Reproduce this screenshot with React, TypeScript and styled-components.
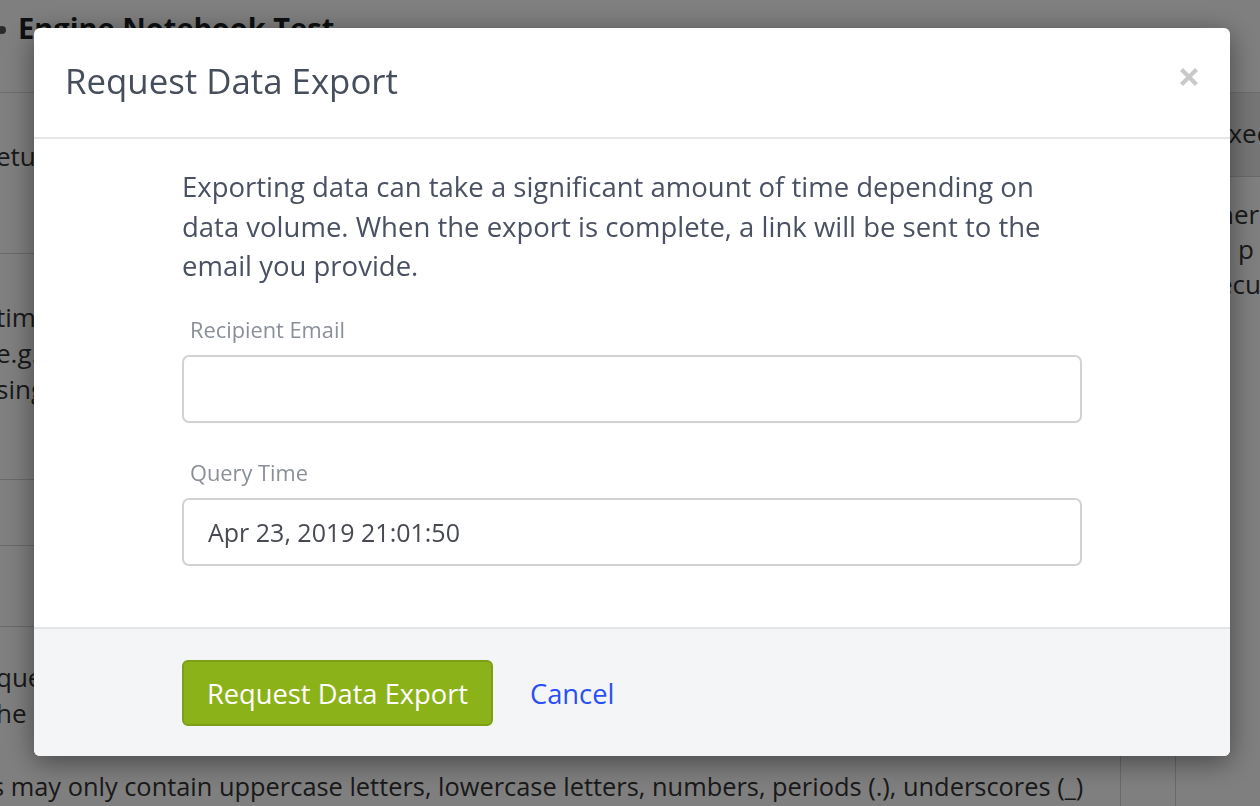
import React from 'react';
import styled, { createGlobalStyle } from 'styled-components';

const GlobalStyle = createGlobalStyle`
  html, body {
    margin: 0;
    padding: 0;
    width: 1260px;
    height: 806px;
    overflow: hidden;
    background: #ffffff;
    font-family: 'Open Sans', 'Noto Sans', sans-serif;
  }
  * {
    box-sizing: border-box;
  }
`;

/* ---------- page behind the modal ---------- */

const Page = styled.div`
  width: 1260px;
  height: 806px;
  overflow: hidden;
  display: flex;
  flex-direction: column;
  color: #222;
`;

const PageHeader = styled.header`
  height: 93px;
  flex-shrink: 0;
  border-bottom: 1px solid #dcdcdc;
  display: flex;
  align-items: flex-start;
  gap: 12px;
  padding: 8px 0 0 0;
  font-size: 29px;
  font-weight: 700;
  color: #1d1f24;
`;

const Bullet = styled.span`
  width: 8px;
  height: 8px;
  margin: 18px 0 0 -2px;
  border-radius: 50%;
  background: #555;
`;

const Columns = styled.div`
  flex: 1;
  display: flex;
  min-width: 0;
`;

const MainCol = styled.div`
  width: 1120px;
  flex-shrink: 0;
  display: flex;
  flex-direction: column;
  overflow: hidden;
`;

const Gutter = styled.div`
  width: 55px;
  flex-shrink: 0;
  border-left: 1px solid #d4d4d4;
`;

const SideCol = styled.div`
  flex: 1;
  min-width: 0;
  overflow: hidden;
  border-left: 1px solid #d4d4d4;
  display: flex;
  flex-direction: column;
`;

const Section = styled.div<{ $h: number; $pad?: number; $last?: boolean }>`
  height: ${(p) => p.$h}px;
  flex-shrink: 0;
  border-bottom: ${(p) => (p.$last ? 'none' : '1px solid #d4d4d4')};
  padding-top: ${(p) => p.$pad ?? 0}px;
  font-size: 26px;
  line-height: 36px;
  color: #333;
  white-space: nowrap;
  overflow: hidden;
`;

const Cut = styled.div`
  margin-left: -4px;
`;

const SideBand = styled.div`
  height: 84px;
  flex-shrink: 0;
  background: #ececec;
  border-bottom: 1px solid #d4d4d4;
  padding: 22px 0 0 38px;
  font-size: 26px;
  color: #333;
  white-space: nowrap;
`;

const SideText = styled.div`
  padding: 20px 0 0 42px;
  font-size: 26px;
  line-height: 35px;
  color: #333;
  white-space: nowrap;
`;

const BottomNote = styled.div`
  margin-left: -8px;
  padding-top: 14px;
  font-size: 25.4px;
  color: #333;
  white-space: nowrap;
`;

/* ---------- modal ---------- */

const Overlay = styled.div`
  position: fixed;
  inset: 0;
  background: rgba(0, 0, 0, 0.5);
  display: flex;
  align-items: flex-start;
  justify-content: flex-start;
  padding: 28px 0 0 34px;
`;

const Modal = styled.div`
  width: 1196px;
  background: #ffffff;
  border-radius: 6px;
  overflow: hidden;
  box-shadow: 0 6px 28px rgba(0, 0, 0, 0.45);
  display: flex;
  flex-direction: column;
`;

const ModalHeader = styled.div`
  height: 111px;
  border-bottom: 2px solid #e6e6e6;
  display: flex;
  align-items: flex-start;
  justify-content: space-between;
  padding: 29px 32px 0 31px;
`;

const Title = styled.h2`
  margin: 0;
  font-size: 34.8px;
  font-weight: 400;
  color: #464d5b;
`;

const CloseButton = styled.button`
  border: 0;
  background: none;
  padding: 0;
  margin-top: 11px;
  width: 18px;
  height: 18px;
  cursor: pointer;
  display: flex;
`;

const ModalBody = styled.div`
  padding: 28px 148px 61px 148px;
  display: flex;
  flex-direction: column;
`;

const Intro = styled.p`
  margin: 0 0 30px;
  font-size: 27.5px;
  line-height: 39.5px;
  color: #4a5162;
`;

const Field = styled.div<{ $gap?: number }>`
  display: flex;
  flex-direction: column;
  margin-top: ${(p) => p.$gap ?? 0}px;
`;

const Label = styled.label`
  padding-left: 8px;
  font-size: 21.8px;
  line-height: 28px;
  color: #8a8f99;
  margin-bottom: 11px;
`;

const Input = styled.input`
  width: 900px;
  height: 68px;
  border: 2px solid #d2d2d2;
  border-radius: 7px;
  padding: 0 24px;
  font-family: inherit;
  font-size: 25px;
  color: #474a50;
  background: #fff;
  outline: none;
`;

const ModalFooter = styled.div`
  height: 129px;
  background: #f4f5f7;
  border-top: 2px solid #e4e5e7;
  display: flex;
  align-items: center;
  gap: 37px;
  padding: 2px 0 0 148px;
`;

const PrimaryButton = styled.button`
  width: 311px;
  height: 66px;
  border: 2px solid #7d9f16;
  border-radius: 6px;
  background: #8cb21a;
  color: #ffffff;
  font-family: inherit;
  font-size: 27.3px;
  cursor: pointer;
`;

const LinkButton = styled.button`
  border: 0;
  background: none;
  padding: 0;
  font-family: inherit;
  font-size: 27.3px;
  color: #2a50f3;
  cursor: pointer;
`;

const CloseIcon = () => (
  <svg width="18" height="18" viewBox="0 0 18 18">
    <path
      d="M3 3 L15 15 M15 3 L3 15"
      stroke="#c9c9c9"
      strokeWidth="4.2"
      strokeLinecap="square"
    />
  </svg>
);

const App: React.FC = () => {
  return (
    <>
      <GlobalStyle />
      <Page>
        <PageHeader>
          <Bullet />
          <span>Engine Notebook Test</span>
        </PageHeader>
        <Columns>
          <MainCol>
            <Section $h={161} $pad={45}>
              <Cut>etup</Cut>
            </Section>
            <Section $h={226} $pad={45}>
              <Cut>time</Cut>
              <Cut>e.g.</Cut>
              <Cut>sing</Cut>
            </Section>
            <Section $h={66} />
            <Section $h={81} />
            <Section $h={128} $pad={32} $last>
              <Cut>query</Cut>
              <Cut>he c</Cut>
            </Section>
            <BottomNote>
              s may only contain uppercase letters, lowercase letters, numbers,
              periods (.), underscores (_)
            </BottomNote>
          </MainCol>
          <Gutter />
          <SideCol>
            <SideBand>Execution</SideBand>
            <SideText>
              <div>here</div>
              <div>ll p</div>
              <div>ecu</div>
            </SideText>
          </SideCol>
        </Columns>
      </Page>
      <Overlay>
        <Modal>
          <ModalHeader>
            <Title>Request Data Export</Title>
            <CloseButton aria-label="Close">
              <CloseIcon />
            </CloseButton>
          </ModalHeader>
          <ModalBody>
            <Intro>
              Exporting data can take a significant amount of time depending on
              data volume. When the export is complete, a link will be sent to
              the email you provide.
            </Intro>
            <Field>
              <Label>Recipient Email</Label>
              <Input type="email" />
            </Field>
            <Field $gap={36}>
              <Label>Query Time</Label>
              <Input defaultValue="Apr 23, 2019 21:01:50" />
            </Field>
          </ModalBody>
          <ModalFooter>
            <PrimaryButton>Request Data Export</PrimaryButton>
            <LinkButton>Cancel</LinkButton>
          </ModalFooter>
        </Modal>
      </Overlay>
    </>
  );
};

export default App;
